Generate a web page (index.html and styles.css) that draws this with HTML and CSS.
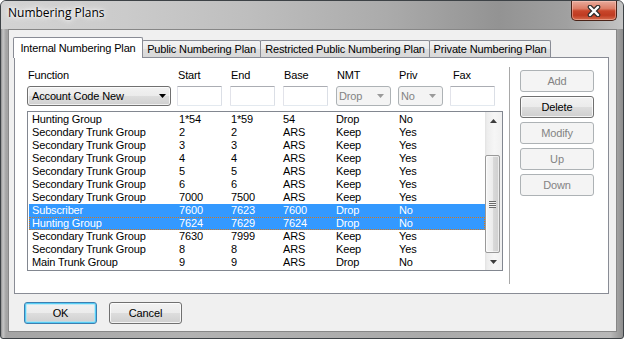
FILE: index.html
```html
<!DOCTYPE html>
<html>
<head>
<meta charset="utf-8">
<title>Numbering Plans</title>
<link rel="stylesheet" href="styles.css">
</head>
<body>
<div class="window">
  <div class="titlebar">
    <span class="title">Numbering Plans</span>
    <div class="close">
      <svg width="14" height="12" viewBox="0 0 14 12">
        <path d="M3 2 L11 10 M11 2 L3 10" stroke="#2e2e2e" stroke-width="4.6" stroke-linecap="round"/>
        <path d="M3 2 L11 10 M11 2 L3 10" stroke="#ffffff" stroke-width="2.4" stroke-linecap="round"/>
      </svg>
    </div>
  </div>
  <div class="client">
    <div class="tabstrip">
      <div class="tab active t1">Internal Numbering Plan</div>
      <div class="tab t2">Public Numbering Plan</div>
      <div class="tab t3">Restricted Public Numbering Plan</div>
      <div class="tab t4">Private Numbering Plan</div>
    </div>
    <div class="panel">
      <div class="main">
        <div class="fields">
          <div class="lbl">Function</div>
          <div class="lbl">Start</div>
          <div class="lbl">End</div>
          <div class="lbl">Base</div>
          <div class="lbl">NMT</div>
          <div class="lbl">Priv</div>
          <div class="lbl fax">Fax</div>
          <div class="combo wide"><span>Account Code New</span>
            <svg class="arr" width="7" height="4" viewBox="0 0 7 4"><path d="M0 0 H7 L3.5 4 Z" fill="#000"/></svg></div>
          <div class="edit"></div>
          <div class="edit"></div>
          <div class="edit"></div>
          <div class="combo disabled nmt"><span>Drop</span>
            <svg class="arr" width="7" height="4" viewBox="0 0 7 4"><path d="M0 0 H7 L3.5 4 Z" fill="#9a9a9a"/></svg></div>
          <div class="combo disabled priv"><span>No</span>
            <svg class="arr" width="7" height="4" viewBox="0 0 7 4"><path d="M0 0 H7 L3.5 4 Z" fill="#9a9a9a"/></svg></div>
          <div class="edit"></div>
        </div>
        <div class="listbox">
          <div class="rows">
            <div class="row"><span>Hunting Group</span><span>1*54</span><span>1*59</span><span>54</span><span>Drop</span><span>No</span></div>
            <div class="row"><span>Secondary Trunk Group</span><span>2</span><span>2</span><span>ARS</span><span>Keep</span><span>Yes</span></div>
            <div class="row"><span>Secondary Trunk Group</span><span>3</span><span>3</span><span>ARS</span><span>Keep</span><span>Yes</span></div>
            <div class="row"><span>Secondary Trunk Group</span><span>4</span><span>4</span><span>ARS</span><span>Keep</span><span>Yes</span></div>
            <div class="row"><span>Secondary Trunk Group</span><span>5</span><span>5</span><span>ARS</span><span>Keep</span><span>Yes</span></div>
            <div class="row"><span>Secondary Trunk Group</span><span>6</span><span>6</span><span>ARS</span><span>Keep</span><span>Yes</span></div>
            <div class="row"><span>Secondary Trunk Group</span><span>7000</span><span>7500</span><span>ARS</span><span>Keep</span><span>Yes</span></div>
            <div class="row sel"><span>Subscriber</span><span>7600</span><span>7623</span><span>7600</span><span>Drop</span><span>No</span></div>
            <div class="row sel focus"><span>Hunting Group</span><span>7624</span><span>7629</span><span>7624</span><span>Drop</span><span>No</span></div>
            <div class="row"><span>Secondary Trunk Group</span><span>7630</span><span>7999</span><span>ARS</span><span>Keep</span><span>Yes</span></div>
            <div class="row"><span>Secondary Trunk Group</span><span>8</span><span>8</span><span>ARS</span><span>Keep</span><span>Yes</span></div>
            <div class="row"><span>Main Trunk Group</span><span>9</span><span>9</span><span>ARS</span><span>Drop</span><span>No</span></div>
          </div>
          <div class="scroll">
            <div class="sb-btn"><svg width="7" height="4" viewBox="0 0 7 4"><path d="M3.5 0 L7 4 H0 Z" fill="#3c3c3c"/></svg></div>
            <div class="sb-track">
              <div class="thumb"><div class="grip"></div></div>
            </div>
            <div class="sb-btn"><svg width="7" height="4" viewBox="0 0 7 4"><path d="M0 0 H7 L3.5 4 Z" fill="#3c3c3c"/></svg></div>
          </div>
        </div>
      </div>
      <div class="sep"></div>
      <div class="side">
        <div class="btn disabled">Add</div>
        <div class="btn">Delete</div>
        <div class="btn disabled">Modify</div>
        <div class="btn disabled">Up</div>
        <div class="btn disabled">Down</div>
      </div>
    </div>
    <div class="footer">
      <div class="btn default">OK</div>
      <div class="btn">Cancel</div>
    </div>
  </div>
</div>
</body>
</html>
```
FILE: styles.css
```css
* { box-sizing: border-box; }
html, body { margin: 0; padding: 0; }
body {
  width: 624px;
  height: 339px;
  overflow: hidden;
  background: #ffffff;
  font-family: "Liberation Sans", Arial, sans-serif;
  font-size: 11px;
  letter-spacing: -0.15px;
  color: #000;
}
.window {
  width: 624px;
  height: 339px;
  border: 1px solid #3d4246;
  border-radius: 6px 6px 3px 3px;
  background: linear-gradient(to right, #8f8f8f 0, #c6c6c6 2px, #a4a4a4 5px, #b2b2b2 30%, #aaaaaa 70%, #b8b8b8 98%, #8e8e8e 100%);
  display: flex;
  flex-direction: column;
  overflow: hidden;
}
.titlebar {
  height: 28px;
  flex: none;
  display: flex;
  align-items: flex-start;
  padding-left: 7px;
  background: linear-gradient(to right, #d3d3d3 0%, #cbcbcb 20%, #bebebe 40%, #ababab 62%, #939393 80%, #a0a0a0 91%, #c4c4c4 100%);
}
.title {
  font-family: "Open Sans", "Noto Sans", sans-serif;
  font-size: 12px;
  line-height: 16px;
  letter-spacing: 0;
  margin-top: 4px;
  color: #000;
  text-shadow: 0 0 6px #fff, 0 0 3px #fff, 0 0 10px rgba(255,255,255,.9);
}
.close {
  margin-left: auto;
  margin-right: 6px;
  width: 46px;
  height: 20px;
  border: 1px solid #4a2217;
  border-top: none;
  border-radius: 0 0 5px 5px;
  background: linear-gradient(to bottom, #e8ab9c 0%, #dc7d66 40%, #c8462b 52%, #bf3b21 75%, #d66c4e 100%);
  box-shadow: inset 0 0 0 1px rgba(255,210,200,.45);
  display: flex;
  align-items: center;
  justify-content: center;
}
.client {
  flex: none;
  height: 303px;
  margin: 0 6px 6px 7px;
  background: #f0f0f0;
  border: 1px solid #878787;
  padding: 7px 7px 0 5px;
  display: flex;
  flex-direction: column;
}
.tabstrip {
  height: 20px;
  display: flex;
  align-items: flex-end;
}
.tab {
  height: 17px;
  margin-left: -1px;
  border: 1px solid #898c95;
  border-bottom: none;
  border-radius: 2px 2px 0 0;
  background: linear-gradient(to bottom, #f3f3f3 0%, #ebebeb 50%, #dedede 51%, #d8d8d8 100%);
  display: flex;
  align-items: center;
  justify-content: center;
  white-space: nowrap;
}
.tab.active {
  height: 21px;
  margin-bottom: -1px;
  background: #ffffff;
  position: relative;
  z-index: 1;
  padding-bottom: 1px;
}
.t1 { width: 130px; }
.t2 { width: 119px; }
.t3 { width: 170px; }
.t4 { width: 122px; }
.panel {
  height: 237px;
  border: 1px solid #898c95;
  background: #ffffff;
  display: flex;
  align-items: flex-start;
}
.main {
  width: 476px;
  margin: 11px 0 0 12px;
}
.fields {
  display: grid;
  grid-template-columns: 150px 53px 53px 53px 62px 52px 45px;
  grid-template-rows: 13px 20px;
  row-gap: 4px;
}
.lbl {
  line-height: 13px;
  padding-left: 1px;
  white-space: nowrap;
}
.lbl.fax { padding-left: 3px; }
.combo {
  height: 20px;
  border: 1px solid #707070;
  border-radius: 3px;
  background: linear-gradient(to bottom, #f2f2f2 0%, #ebebeb 50%, #dddddd 51%, #cfcfcf 100%);
  box-shadow: inset 0 0 0 1px rgba(255,255,255,.7);
  display: flex;
  align-items: center;
  padding-left: 4px;
  white-space: nowrap;
}
.combo .arr { margin-left: auto; margin-right: 4px; }
.combo.wide { width: 144px; }
.combo.disabled {
  border-color: #adb2b5;
  background: #f4f4f4;
  box-shadow: none;
  color: #838383;
  padding-left: 2px;
}
.combo.disabled .arr { margin-right: 6px; }
.combo.nmt { width: 55px; }
.combo.priv { width: 45px; }
.edit {
  width: 45px;
  height: 20px;
  background: #fff;
  border: 1px solid;
  border-color: #abadb3 #dbdfe6 #e3e9ef #e2e3ea;
  border-radius: 1px;
}
.listbox {
  margin-top: 5px;
  height: 160px;
  border: 1px solid #828790;
  display: flex;
}
.rows {
  flex: 1;
  padding: 1px 0 0 1px;
}
.row {
  display: grid;
  grid-template-columns: 147px 52px 52px 53px 63px 1fr;
  height: 13px;
  line-height: 13px;
  padding-left: 3px;
  white-space: nowrap;
}
.row.sel {
  background: #3399ff;
  color: #ffffff;
}
.row.focus {
  outline: 1px dotted #d2781e;
  outline-offset: -1px;
}
.scroll {
  width: 17px;
  display: flex;
  flex-direction: column;
  background: linear-gradient(to right, #e2e2e2 0, #ededed 2px, #f6f6f6 55%, #f0f0f0 100%);
}
.sb-btn {
  height: 17px;
  display: flex;
  align-items: center;
  justify-content: center;
  flex: none;
}
.sb-track {
  flex: 1;
  display: flex;
  flex-direction: column;
  justify-content: flex-end;
}
.thumb {
  height: 98px;
  margin: 0 2px 0 0;
  border: 1px solid #9a9a9a;
  border-radius: 2px;
  background: linear-gradient(to right, #f6f6f6 0%, #ececec 50%, #dadada 51%, #cfcfcf 100%);
  box-shadow: inset 0 0 0 1px rgba(255,255,255,.6);
  display: flex;
  align-items: center;
  justify-content: center;
}
.grip {
  width: 7px;
  height: 7px;
  background: repeating-linear-gradient(to bottom, #6a6a6a 0 1px, #f4f4f4 1px 2px);
}
.sep {
  width: 1px;
  height: 217px;
  margin: 9px 10px 0 6px;
  background: #a8a8a8;
}
.side {
  width: 74px;
  margin-top: 12px;
  display: flex;
  flex-direction: column;
  gap: 4px;
}
.btn {
  width: 74px;
  height: 22px;
  border: 1px solid #707070;
  border-radius: 3px;
  background: linear-gradient(to bottom, #f2f2f2 0%, #ebebeb 50%, #dddddd 51%, #cfcfcf 100%);
  box-shadow: inset 0 0 0 1px rgba(255,255,255,.75);
  display: flex;
  align-items: center;
  justify-content: center;
  white-space: nowrap;
}
.btn.disabled {
  border-color: #adb2b5;
  background: #f4f4f4;
  box-shadow: none;
  color: #838383;
}
.footer {
  margin-top: 8px;
  padding-left: 10px;
  display: flex;
  gap: 12px;
}
.footer .btn { width: 73px; }
.btn.default {
  border-color: #3c7fb1;
  box-shadow: inset 0 0 0 1px #56cdf5, inset 0 0 0 2px rgba(160,228,250,.6);
}
```
